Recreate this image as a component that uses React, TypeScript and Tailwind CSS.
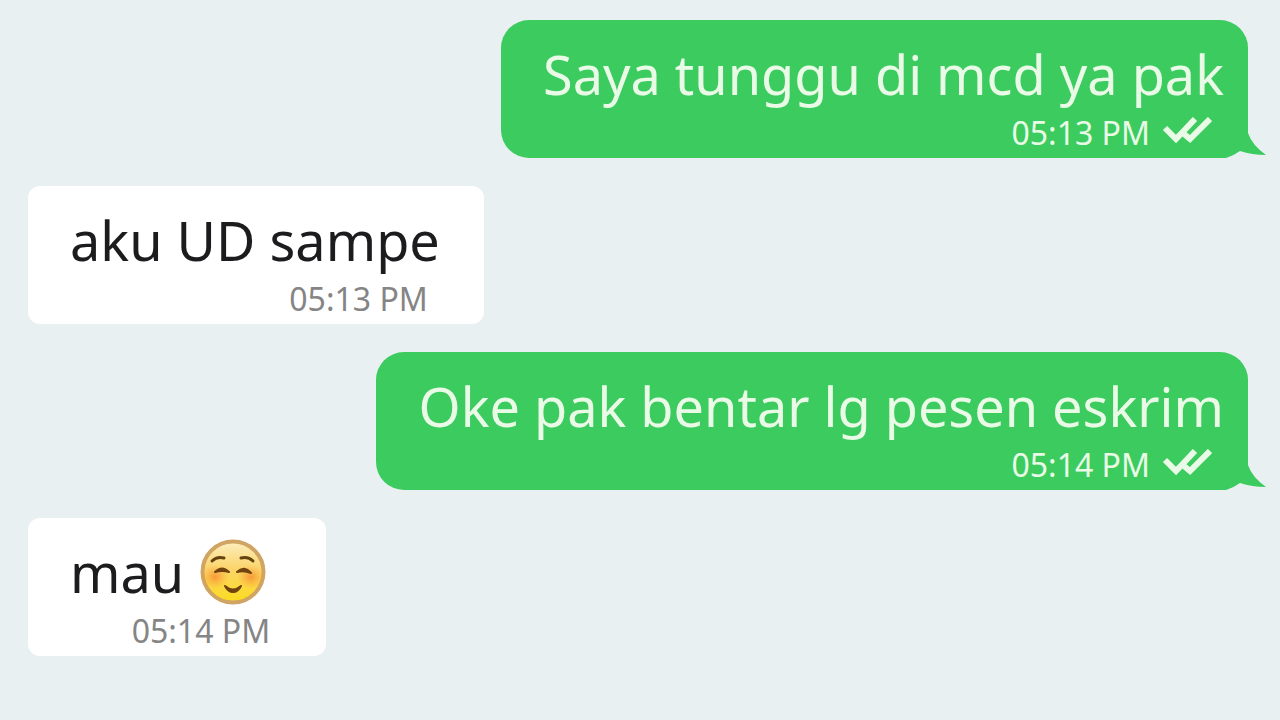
import React from "react";
import clsx from "clsx";

type Message = {
  id: number;
  text: string;
  time: string;
  sent: boolean;
  smile?: boolean;
};

const MESSAGES: Message[] = [
  { id: 1, text: "Saya tunggu di mcd ya pak", time: "05:13 PM", sent: true },
  { id: 2, text: "aku UD sampe", time: "05:13 PM", sent: false },
  { id: 3, text: "Oke pak bentar lg pesen eskrim", time: "05:14 PM", sent: true },
  { id: 4, text: "mau", time: "05:14 PM", sent: false, smile: true },
];

const DoubleCheck = () => {
  return (
    <svg
      className="h-8 w-[50px]"
      viewBox="0 0 50 32"
      fill="none"
      stroke="currentColor"
      strokeWidth="6"
      role="img"
      aria-label="Read"
    >
      <path d="M3 11 L14 22 L33 2" />
      <path d="M22 17 L28 22 L48 2" />
    </svg>
  );
};

const Tail = () => {
  return (
    <svg
      className="absolute -right-[18px] bottom-0 h-9 w-12 text-[#3ccb5f]"
      viewBox="0 0 48 36"
      fill="currentColor"
      aria-hidden="true"
    >
      <path d="M0 0 H30 V11 Q34 23 48 33 Q34 33 22 29 Q15 34 8 36 H0 Z" />
    </svg>
  );
};

const Smile = () => {
  return (
    <svg className="mr-4 size-[66px]" viewBox="0 0 66 66" fill="none" role="img" aria-label="Smiling face">
      <defs>
        <linearGradient id="face" x1="0" y1="0" x2="0" y2="1">
          <stop offset="0" stopColor="#fdeec0" />
          <stop offset="0.45" stopColor="#fbd56a" />
          <stop offset="1" stopColor="#fbdc1c" />
        </linearGradient>
        <radialGradient id="cheek">
          <stop offset="0" stopColor="#f88a30" stopOpacity="0.8" />
          <stop offset="1" stopColor="#f9a03c" stopOpacity="0" />
        </radialGradient>
      </defs>
      <circle cx="33" cy="33" r="30.5" fill="url(#face)" stroke="#d0a462" strokeWidth="4" />
      <ellipse cx="15" cy="38" rx="14" ry="12" fill="url(#cheek)" />
      <ellipse cx="51" cy="38" rx="14" ry="12" fill="url(#cheek)" />
      <g stroke="#65430f" strokeWidth="3" strokeLinecap="round">
        <path d="M12 22 Q17 17 24 19" />
        <path d="M41 19 Q48 17 53 22" />
      </g>
      <g fill="#71430f">
        <path d="M15 33 Q22 26 29 33 Q22 31 15 33 Z" stroke="#71430f" strokeWidth="2" strokeLinejoin="round" />
        <path d="M37 33 Q44 26 51 34 Q44 31 37 33 Z" stroke="#71430f" strokeWidth="2" strokeLinejoin="round" />
        <path d="M25 47 Q33 54 41 47 Q38 53 33 53 Q28 53 25 47 Z" stroke="#71430f" strokeWidth="2" strokeLinejoin="round" />
      </g>
    </svg>
  );
};

const Bubble = ({ message }: { message: Message }) => {
  const { text, time, sent, smile } = message;

  return (
    <li
      className={clsx(
        "relative w-fit pt-5 pl-[42px]",
        sent
          ? "self-end rounded-[28px] bg-[#3ccb5f] pr-6 text-[#e9fbe6]"
          : "self-start rounded-xl bg-white pr-11 text-[#1c1c1e]"
      )}
    >
      {sent && <Tail />}
      <p className="relative flex h-[68px] items-center gap-4 text-[54px] leading-[68px] whitespace-nowrap">
        {text}
        {smile && <Smile />}
      </p>
      <div className={clsx("relative flex items-center justify-end gap-3 pr-3 text-[32px] leading-[50px]", !sent && "text-[#858585]")}>
        <time>{time}</time>
        {sent && <DoubleCheck />}
      </div>
    </li>
  );
};

const App = () => {
  return (
    <main className="min-h-screen bg-[#e8f0f1] pt-5 pr-8 pb-5 pl-7 font-['Noto_Sans',sans-serif]">
      <ul className="flex flex-col gap-7">
        {MESSAGES.map((message) => (
          <Bubble key={message.id} message={message} />
        ))}
      </ul>
    </main>
  );
};

export default App;
